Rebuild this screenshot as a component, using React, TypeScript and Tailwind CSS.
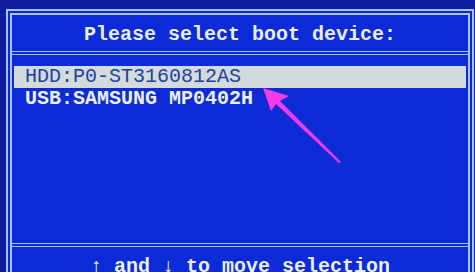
export default function App() {
  const mono = { fontFamily: '"Liberation Mono", "DejaVu Sans Mono", monospace' };

  return (
    <div className="relative w-[475px] h-[272px] overflow-hidden bg-[#0b1c9e] pt-[9px] pl-[6px] pr-[1px]" style={mono}>
      <div className="flex h-[300px] flex-col border-[6px] border-double border-[#a9c4f2] bg-[#0a2bd6]">
        <div className="flex h-[36px] items-center justify-center pt-[3px] text-[20px] font-bold text-[#e9eef8]">
          Please select boot device:
        </div>
        <div className="border-b-[4px] border-double border-[#a9c4f2]" />
        <div className="flex h-[188px] flex-col px-[2px] pt-[11px]">
          <div className="flex h-[22px] items-center bg-[#d3dbdc] pl-[11px] text-[20px] text-[#243f9e]">
            HDD:P0-ST3160812AS
          </div>
          <div className="flex h-[22px] items-center pl-[11px] text-[20px] font-bold text-[#eef1f8]">
            USB:SAMSUNG MP0402H
          </div>
        </div>
        <div className="border-t-[4px] border-double border-[#a9c4f2]" />
        <div className="flex h-[36px] items-center justify-center pt-[4px] text-[20px] font-bold text-[#e9eef8]">
          ↑ and ↓ to move selection
        </div>
      </div>

      <svg className="absolute left-0 top-0" width="475" height="272" viewBox="0 0 475 272">
        <polygon points="263,88 289,96 280,101 341,162 339,163 276,104 271,111" fill="#f53ce6" />
      </svg>
    </div>
  );
}
